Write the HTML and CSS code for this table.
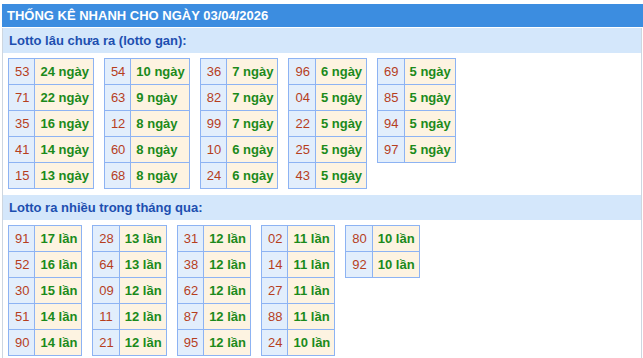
FILE: index.html
```html
<!DOCTYPE html>
<html lang="vi">
<head>
<meta charset="utf-8">
<title>Thống kê nhanh</title>
<link rel="stylesheet" href="styles.css">
</head>
<body>
<div class="wrap">
  <div class="title">THỐNG KÊ NHANH CHO NGÀY 03/04/2026</div>
  <div class="box">
    <div class="bar">Lotto lâu chưa ra (lotto gan):</div>
    <div class="tables">
      <table><tr><td class="n">53</td><td class="v">24 ngày</td></tr><tr><td class="n">71</td><td class="v">22 ngày</td></tr><tr><td class="n">35</td><td class="v">16 ngày</td></tr><tr><td class="n">41</td><td class="v">14 ngày</td></tr><tr><td class="n">15</td><td class="v">13 ngày</td></tr></table>
      <table><tr><td class="n">54</td><td class="v">10 ngày</td></tr><tr><td class="n">63</td><td class="v">9 ngày</td></tr><tr><td class="n">12</td><td class="v">8 ngày</td></tr><tr><td class="n">60</td><td class="v">8 ngày</td></tr><tr><td class="n">68</td><td class="v">8 ngày</td></tr></table>
      <table><tr><td class="n">36</td><td class="v">7 ngày</td></tr><tr><td class="n">82</td><td class="v">7 ngày</td></tr><tr><td class="n">99</td><td class="v">7 ngày</td></tr><tr><td class="n">10</td><td class="v">6 ngày</td></tr><tr><td class="n">24</td><td class="v">6 ngày</td></tr></table>
      <table><tr><td class="n">96</td><td class="v">6 ngày</td></tr><tr><td class="n">04</td><td class="v">5 ngày</td></tr><tr><td class="n">22</td><td class="v">5 ngày</td></tr><tr><td class="n">25</td><td class="v">5 ngày</td></tr><tr><td class="n">43</td><td class="v">5 ngày</td></tr></table>
      <table><tr><td class="n">69</td><td class="v">5 ngày</td></tr><tr><td class="n">85</td><td class="v">5 ngày</td></tr><tr><td class="n">94</td><td class="v">5 ngày</td></tr><tr><td class="n">97</td><td class="v">5 ngày</td></tr></table>
    </div>
    <div class="bar">Lotto ra nhiều trong tháng qua:</div>
    <div class="tables">
      <table><tr><td class="n">91</td><td class="v">17 lần</td></tr><tr><td class="n">52</td><td class="v">16 lần</td></tr><tr><td class="n">30</td><td class="v">15 lần</td></tr><tr><td class="n">51</td><td class="v">14 lần</td></tr><tr><td class="n">90</td><td class="v">14 lần</td></tr></table>
      <table><tr><td class="n">28</td><td class="v">13 lần</td></tr><tr><td class="n">64</td><td class="v">13 lần</td></tr><tr><td class="n">09</td><td class="v">12 lần</td></tr><tr><td class="n">11</td><td class="v">12 lần</td></tr><tr><td class="n">21</td><td class="v">12 lần</td></tr></table>
      <table><tr><td class="n">31</td><td class="v">12 lần</td></tr><tr><td class="n">38</td><td class="v">12 lần</td></tr><tr><td class="n">62</td><td class="v">12 lần</td></tr><tr><td class="n">87</td><td class="v">12 lần</td></tr><tr><td class="n">95</td><td class="v">12 lần</td></tr></table>
      <table><tr><td class="n">02</td><td class="v">11 lần</td></tr><tr><td class="n">14</td><td class="v">11 lần</td></tr><tr><td class="n">27</td><td class="v">11 lần</td></tr><tr><td class="n">88</td><td class="v">11 lần</td></tr><tr><td class="n">24</td><td class="v">10 lần</td></tr></table>
      <table><tr><td class="n">80</td><td class="v">10 lần</td></tr><tr><td class="n">92</td><td class="v">10 lần</td></tr></table>
    </div>
  </div>
</div>
</body>
</html>
```

FILE: styles.css
```css
html, body {
  margin: 0;
  padding: 0;
  background: #ffffff;
}
body {
  font-family: "Liberation Sans", Arial, sans-serif;
  font-size: 13px;
}
.wrap {
  padding: 4px 0 0 2px;
}
.title {
  height: 23px;
  line-height: 23px;
  background: #3c8de0;
  color: #ffffff;
  font-weight: bold;
  padding-left: 5px;
}
.box {
  width: 638px;
  border-left: 1px solid #cdd6e0;
  border-right: 1px solid #cdd6e0;
  padding-bottom: 3px;
}
.bar {
  margin-top: 1px;
  height: 25px;
  line-height: 25px;
  background: #d4e7fb;
  color: #1d4fb0;
  font-weight: bold;
  padding-left: 6px;
}
.tables {
  display: flex;
  align-items: flex-start;
  gap: 10px;
  padding: 5px 0 5px 5px;
}
table {
  border-collapse: collapse;
}
td {
  border: 1px solid #8db3f3;
  height: 25px;
  padding: 0 5px;
  white-space: nowrap;
}
td.n {
  background: #e2eefc;
  color: #b63e1e;
  padding: 0 5px 0 6px;
}
td.v {
  background: #fdf3e1;
  color: #1b8a1b;
  font-weight: bold;
  padding: 0 4px 0 5px;
}
```
